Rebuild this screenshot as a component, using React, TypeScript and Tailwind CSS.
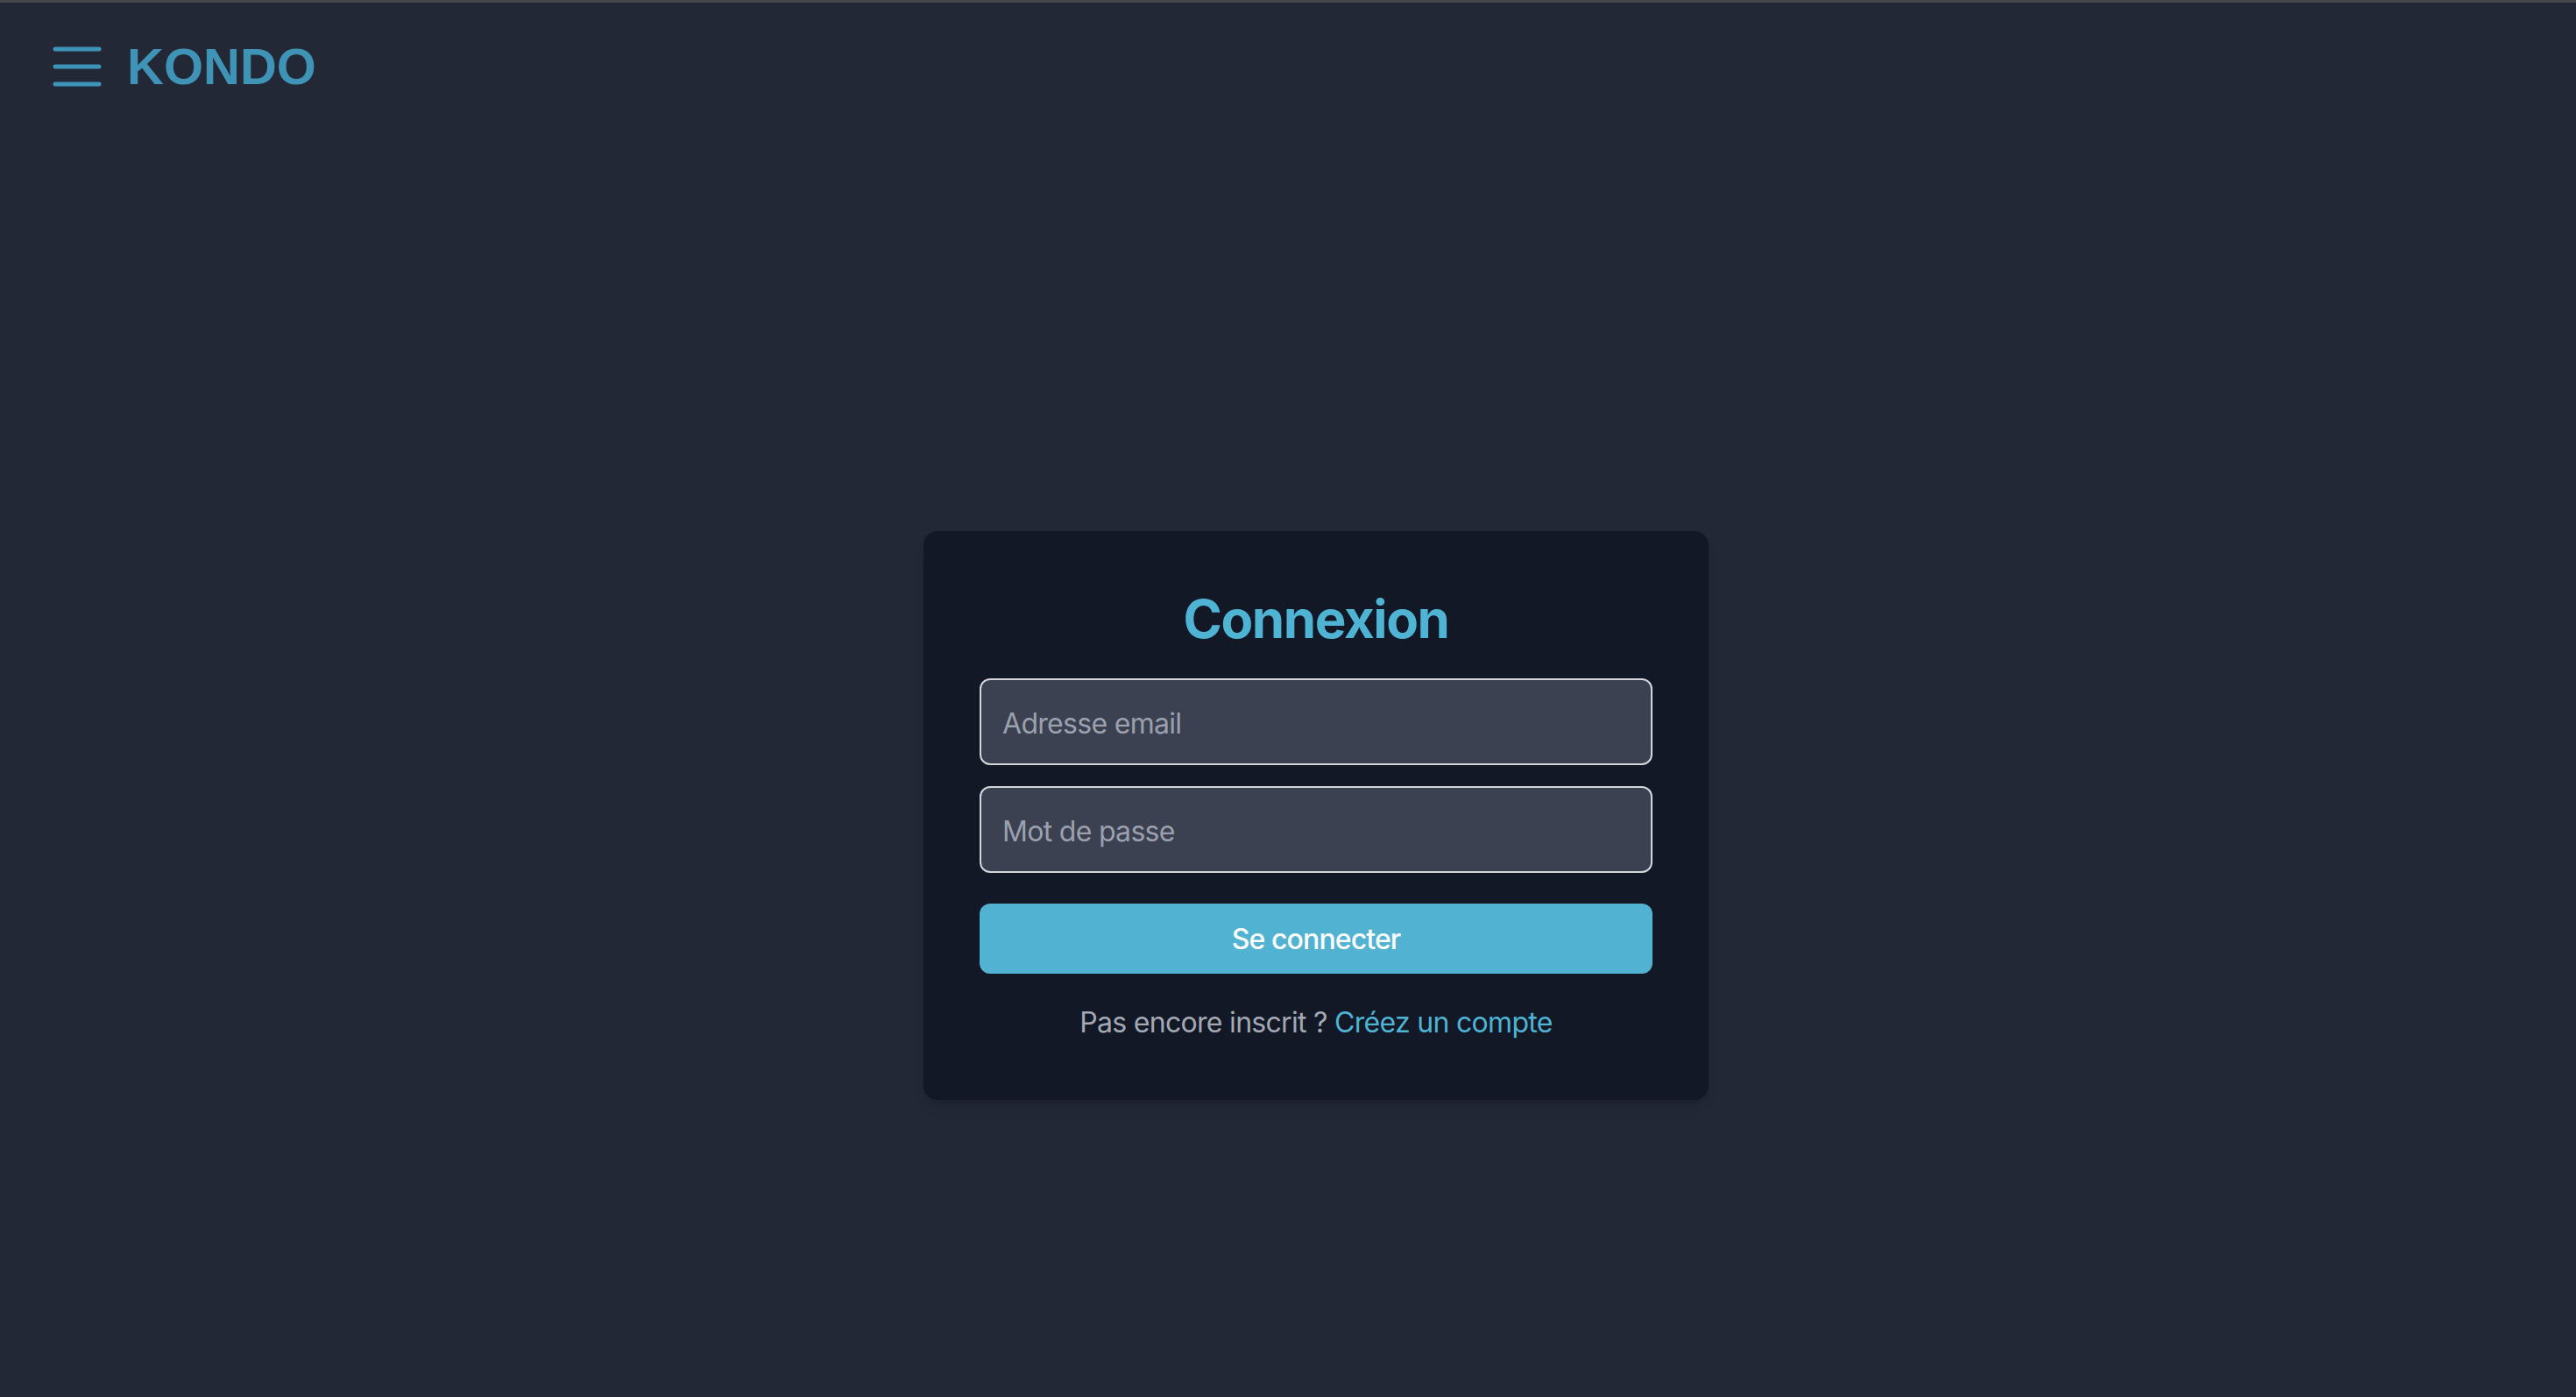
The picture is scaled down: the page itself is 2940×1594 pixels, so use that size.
export default function App() {
  return (
    <div className="min-h-[1594px] w-full bg-[#222835] font-['Inter',sans-serif]">
      <div className="h-[3px] w-full bg-[#45474b]" />
      <header className="flex items-center gap-[29px] pl-[60px] pt-[44px] pb-[40px]">
        <svg width="56" height="46" viewBox="0 0 56 46" className="shrink-0">
          <g stroke="#3f93b6" strokeWidth="5" strokeLinecap="round">
            <line x1="3" y1="3" x2="53" y2="3" />
            <line x1="3" y1="23" x2="53" y2="23" />
            <line x1="3" y1="43" x2="53" y2="43" />
          </g>
        </svg>
        <span className="font-['Liberation_Sans',Arial,sans-serif] text-[58px] font-bold leading-none text-[#3f93b6]">
          KONDO
        </span>
      </header>

      <main className="flex justify-center pl-16 pt-[461px]">
        <div className="w-[896px] rounded-2xl bg-[#121826] p-16 shadow-lg">
          <h1 className="mb-8 text-center text-[60px] font-bold leading-[72px] tracking-[-1.4px] text-[#4fb3d3]">
            Connexion
          </h1>
          <input
            type="email"
            placeholder="Adresse email"
            className="mb-6 block h-[99px] w-full rounded-xl border-2 border-[#d4d6db] bg-[#3b4150] px-6 pt-[3px] text-[32px] tracking-[-0.7px] text-white placeholder:text-[#9aa0ad] outline-none"
          />
          <input
            type="password"
            placeholder="Mot de passe"
            className="block h-[99px] w-full rounded-xl border-2 border-[#d4d6db] bg-[#3b4150] px-6 pt-[3px] text-[32px] tracking-[-0.7px] text-white placeholder:text-[#9aa0ad] outline-none"
          />
          <button className="mt-[35px] flex h-[80px] w-full items-center justify-center rounded-xl bg-[#52b2d2] pt-[2px] text-[32px] font-medium tracking-[-0.9px] text-white">
            Se connecter
          </button>
          <p className="mt-8 text-center text-[32px] leading-[48px] tracking-[-0.7px] text-[#a3a8b3]">
            Pas encore inscrit ? <a className="text-[#4fb3d3]">Créez un compte</a>
          </p>
        </div>
      </main>
    </div>
  );
}
